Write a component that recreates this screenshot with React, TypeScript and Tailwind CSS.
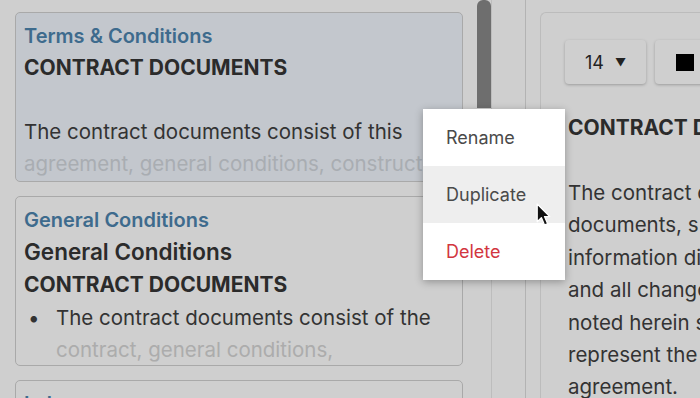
import { Fragment } from "react";

const font = { fontFamily: "Inter, 'Noto Sans', sans-serif" };

function Card({ selected, children }: { selected?: boolean; children: React.ReactNode }) {
  return (
    <div
      className={`h-[170px] shrink-0 overflow-hidden rounded-[5px] border border-[#a9a9a9] px-2 pt-[7px] ${
        selected ? "bg-[#c3c7cd]" : "bg-[#cfcfcf]"
      }`}
    >
      {children}
    </div>
  );
}

function Cursor() {
  return (
    <svg width="17" height="25" viewBox="0 0 16 24" className="absolute left-[536px] top-[203px]">
      <path d="M1 1 L1 18 L5 14 L8 21 L11 20 L8 13 L13 13 Z" fill="#111" stroke="#fff" strokeWidth="1.2" strokeLinejoin="round" />
    </svg>
  );
}

export default function App() {
  const para = [
    "The contract d",
    "documents, s",
    "information di",
    "and all change",
    "noted herein s",
    "represent the",
    "agreement.",
  ];
  return (
    <div className="relative h-[398px] w-[700px] overflow-hidden bg-[#cfcfcf] text-[#333]" style={font}>
      <div className="flex h-full">
        {/* list */}
        <div className="flex w-[477px] shrink-0 flex-col gap-[14px] pl-[15px] pr-[14px] pt-[12px]">
          <Card selected>
            <p className="text-[20px] font-semibold leading-[32px] text-[#3e6b8d]">Terms &amp; Conditions</p>
            <p className="text-[21px] font-bold leading-[32px] text-[#2b2b2b]">CONTRACT DOCUMENTS</p>
            <p className="h-[32px]" />
            <p className="whitespace-nowrap text-[20.5px] leading-[32px]">The contract documents consist of this</p>
            <p className="whitespace-nowrap text-[20.5px] leading-[32px] text-[#a9adb2]">agreement, general conditions, construction</p>
          </Card>
          <Card>
            <p className="text-[20px] font-semibold leading-[32px] text-[#3e6b8d]">General Conditions</p>
            <p className="text-[22.5px] font-semibold leading-[32px] text-[#2b2b2b]">General Conditions</p>
            <p className="text-[21px] font-bold leading-[34px] text-[#2b2b2b]">CONTRACT DOCUMENTS</p>
            <div className="flex whitespace-nowrap text-[20.5px] leading-[32px]">
              <span className="w-[32px] pl-[4px]">•</span>
              <span>The contract documents consist of the</span>
            </div>
            <p className="whitespace-nowrap pl-[32px] text-[20.5px] leading-[32px] text-[#acacac]">contract, general conditions,</p>
          </Card>
          <Card>
            <p className="text-[20px] font-semibold leading-[32px] text-[#3e6b8d]">Labor</p>
          </Card>
        </div>

        {/* scrollbar */}
        <div className="w-[15px] shrink-0 border-r border-[#bdbdbd]">
          <div className="h-[108px] w-[14px] rounded-t-[6px] bg-[#6e6e6e]" />
        </div>

        <div className="w-[34px] shrink-0 border-r border-[#b3b3b3]" />

        {/* editor */}
        <div className="min-w-0 flex-1 pl-[14px] pt-[12px]">
          <div className="h-[420px] rounded-tl-[6px] border-l border-t border-[#bcbcbc] pl-[24px] pt-[27px]">
            <div className="flex gap-[9px]">
              <div className="flex h-[44px] w-[81px] shrink-0 items-center gap-[11px] rounded-[4px] bg-[#cfcfcf] pl-[20px] text-[18px] text-[#222] shadow-[0_1px_3px_rgba(0,0,0,0.25)]">
                14
                <span className="text-[11px]">▼</span>
              </div>
              <div className="flex h-[44px] w-[81px] shrink-0 items-center rounded-[4px] bg-[#cfcfcf] pl-[21px] shadow-[0_1px_3px_rgba(0,0,0,0.25)]">
                <div className="h-[17px] w-[18px] bg-black" />
              </div>
            </div>
            <p className="mt-[28px] whitespace-nowrap pl-[3px] text-[21px] font-bold leading-[32px] text-[#2b2b2b]">CONTRACT DOCUMENTS</p>
            <div className="mt-[33px] pl-[3px] text-[20.5px] leading-[32.4px]">
              {para.map((l) => (
                <Fragment key={l}>
                  <p className="whitespace-nowrap">{l}</p>
                </Fragment>
              ))}
            </div>
          </div>
        </div>
      </div>

      {/* context menu */}
      <div className="absolute left-[423px] top-[109px] w-[142px] bg-white text-[18px] shadow-[0_2px_8px_rgba(0,0,0,0.3)]">
        <div className="flex h-[57px] items-center pl-[23px] text-[#4a4a4a]">Rename</div>
        <div className="flex h-[57px] items-center bg-[#eeeeee] pl-[23px] text-[#4a4a4a]">Duplicate</div>
        <div className="flex h-[57px] items-center pl-[23px] text-[#d2363f]">Delete</div>
      </div>
      <Cursor />
    </div>
  );
}
